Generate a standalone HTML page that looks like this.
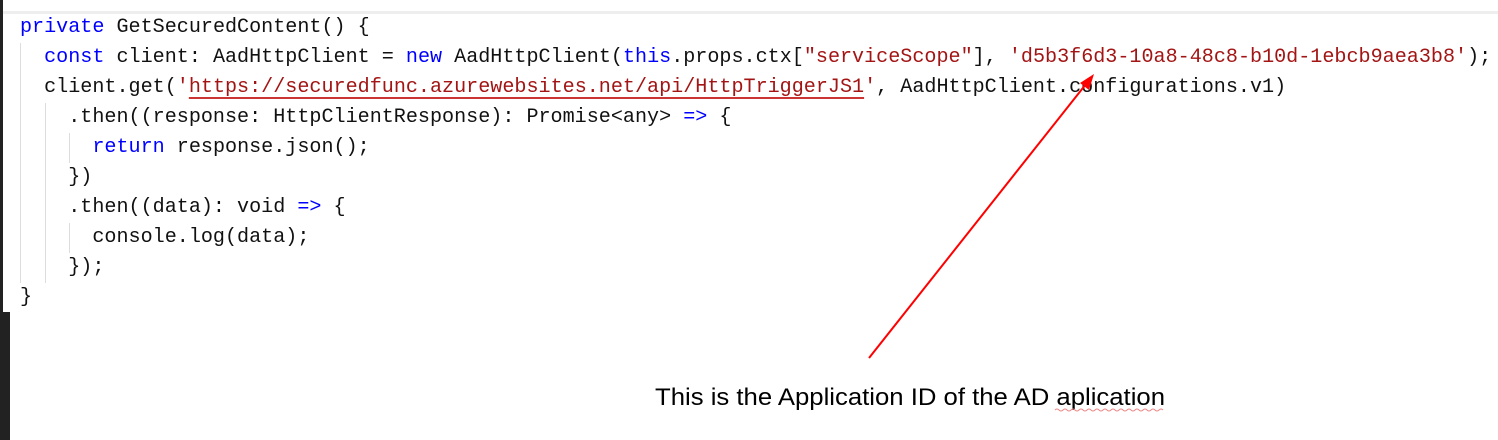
<!DOCTYPE html>
<html><head><meta charset="utf-8"><style>
html,body{margin:0;padding:0;background:#fff;width:1498px;height:440px;overflow:hidden;position:relative}
.code{position:absolute;left:20px;top:13px;font-family:"Liberation Mono",monospace;font-size:20.1px;line-height:30px;color:#111;white-space:pre;margin:0}
.k{color:#0000ff}.s{color:#a31515}
.u{text-decoration:underline;text-decoration-color:#c33;text-underline-offset:5px;text-decoration-thickness:2px}
.g{position:absolute;width:1px;background:#ddd}
</style></head><body>
<div style="position:absolute;left:0;top:0;width:3px;height:312px;background:#222"></div>
<div style="position:absolute;left:0;top:312px;width:10px;height:128px;background:#222"></div>
<div style="position:absolute;left:3px;top:11px;width:1495px;height:3px;background:#eee"></div>
<div class="g" style="left:20px;top:43px;height:240px"></div>
<div class="g" style="left:45px;top:103px;height:180px"></div>
<div class="g" style="left:69px;top:133px;height:30px"></div>
<div class="g" style="left:69px;top:223px;height:30px"></div>
<pre class="code"><span class="k">private</span> GetSecuredContent() {
  <span class="k">const</span> client: AadHttpClient = <span class="k">new</span> AadHttpClient(<span class="k">this</span>.props.ctx[<span class="s">"serviceScope"</span>], <span class="s">'d5b3f6d3-10a8-48c8-b10d-1ebcb9aea3b8'</span>);
  client.get(<span class="s">'<span class="u">https://securedfunc.azurewebsites.net/api/HttpTriggerJS1</span>'</span>, AadHttpClient.configurations.v1)
    .then((response: HttpClientResponse): Promise&lt;any&gt; <span class="k">=&gt;</span> {
      <span class="k">return</span> response.json();
    })
    .then((data): void <span class="k">=&gt;</span> {
      console.log(data);
    });
}</pre>
<svg width="1498" height="440" style="position:absolute;left:0;top:0">
<line x1="869" y1="358" x2="1090" y2="79" stroke="#f00" stroke-width="2"/>
<polygon points="1094,74 1080,83 1089,90" fill="#f00"/>
<text x="655" y="405" font-family="Liberation Sans, sans-serif" font-size="24" fill="#000" textLength="510" lengthAdjust="spacingAndGlyphs">This is the Application ID of the AD aplication</text>
<path d="M1055 410 q2 -2 4 0 t4 0 t4 0 t4 0 t4 0 t4 0 t4 0 t4 0 t4 0 t4 0 t4 0 t4 0 t4 0 t4 0 t4 0 t4 0 t4 0 t4 0 t4 0 t4 0 t4 0 t4 0 t4 0 t4 0 t4 0 t4 0 t4 0" stroke="#e88" fill="none" stroke-width="1"/>
</svg>
</body></html>
